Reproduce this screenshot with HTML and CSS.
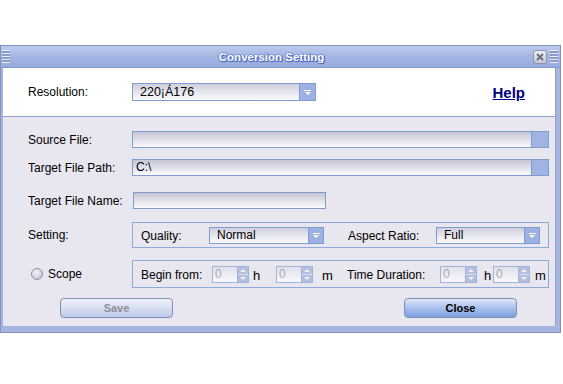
FILE: index.html
```html
<!DOCTYPE html>
<html lang="en">
<head>
    <meta charset="UTF-8">
    <title>Conversion Setting</title>
    <link rel="stylesheet" href="styles.css">
</head>
<body>
    <div class="window">
        <div class="titlebar">
            <span class="grip"></span>
            <span class="title">Conversion Setting</span>
            <span class="close-x">
                <svg width="8" height="8" viewBox="0 0 8 8"><path d="M1 1L7 7M7 1L1 7" stroke="#6a6e7c" stroke-width="1.8" fill="none"/></svg>
            </span>
            <span class="grip"></span>
        </div>

        <div class="frame">
            <div class="top-panel">
                <label class="label">Resolution:</label>
                <div class="combo combo-res">
                    <span class="combo-text">220¡Á176</span>
                    <span class="drop"></span>
                </div>
                <a class="help" href="#">Help</a>
            </div>

            <div class="main-panel">
                <div class="row row-source">
                    <label class="label">Source File:</label>
                    <div class="field field-path">
                        <span class="field-text"></span>
                        <span class="browse"></span>
                    </div>
                </div>

                <div class="row row-target">
                    <label class="label">Target File Path:</label>
                    <div class="field field-path">
                        <span class="field-text">C:\</span>
                        <span class="browse"></span>
                    </div>
                </div>

                <div class="row row-name">
                    <label class="label">Target File Name:</label>
                    <div class="field field-name"><span class="field-text"></span></div>
                </div>

                <div class="row row-setting">
                    <label class="label">Setting:</label>
                    <div class="group">
                        <span class="glabel quality-label">Quality:</span>
                        <div class="combo combo-quality">
                            <span class="combo-text">Normal</span>
                            <span class="drop"></span>
                        </div>
                        <span class="glabel aspect-label">Aspect Ratio:</span>
                        <div class="combo combo-aspect">
                            <span class="combo-text">Full</span>
                            <span class="drop"></span>
                        </div>
                    </div>
                </div>

                <div class="row row-scope">
                    <label class="label scope">
                        <span class="radio"></span>Scope
                    </label>
                    <div class="group group-time">
                        <span class="glabel begin-label">Begin from:</span>
                        <div class="spin"><span class="spin-text">0</span><span class="spin-arrows"><i class="up"></i><i class="down"></i></span></div>
                        <span class="unit unit-h1">h</span>
                        <div class="spin"><span class="spin-text">0</span><span class="spin-arrows"><i class="up"></i><i class="down"></i></span></div>
                        <span class="unit unit-m1">m</span>
                        <span class="glabel duration-label">Time Duration:</span>
                        <div class="spin"><span class="spin-text">0</span><span class="spin-arrows"><i class="up"></i><i class="down"></i></span></div>
                        <span class="unit unit-h2">h</span>
                        <div class="spin"><span class="spin-text">0</span><span class="spin-arrows"><i class="up"></i><i class="down"></i></span></div>
                        <span class="unit unit-m2">m</span>
                    </div>
                </div>

                <div class="row row-buttons">
                    <button class="btn btn-save" disabled>Save</button>
                    <button class="btn btn-close">Close</button>
                </div>
            </div>
        </div>
    </div>
</body>
</html>
```

FILE: styles.css
```css
* {
    box-sizing: border-box;
}

body {
    margin: 0;
    background: #fff;
    font-family: 'Liberation Sans', Arial, sans-serif;
    font-size: 12px;
    color: #000;
}

.window {
    margin-top: 45px;
    width: 561px;
    height: 288px;
    border: 1px solid #8292c0;
    background: #a6b5e0;
}

/* title bar */
.titlebar {
    height: 22px;
    display: flex;
    align-items: center;
    padding: 0 2px 0 1px;
    background: linear-gradient(#bccaee, #a5b6e3 50%, #98abdf);
    border-bottom: 1px solid #8a9ac6;
}

.grip {
    width: 8px;
    height: 13px;
    background: repeating-linear-gradient(#e8eef8 0, #e8eef8 1px, #8a9ac6 1px, #8a9ac6 3px);
}

.title {
    flex: 1;
    text-align: center;
    color: #fff;
    font-weight: bold;
    font-size: 11.5px;
    text-shadow: 1px 0 0 #4a6cc4, -1px 0 0 #6a88d4, 0 1px 0 #4a6cc4, 0 -1px 0 #7a96dc, 1px 1px 1px #3a5cb4;
}

.close-x {
    width: 14px;
    height: 14px;
    margin-right: 3px;
    border: 1px solid #8c93aa;
    border-radius: 3px;
    background: linear-gradient(#eeeef4, #c2c6d6);
    display: flex;
    align-items: center;
    justify-content: center;
}

.frame {
    padding: 0 4px 6px 2px;
}

/* resolution panel */
.top-panel {
    height: 48px;
    background: #fff;
    border-right: 1px solid #9a9aa6;
    display: flex;
    align-items: center;
    padding-left: 25px;
}

.label {
    width: 104px;
    flex-shrink: 0;
}

.combo {
    display: flex;
    height: 18px;
    border: 1px solid #7e9ccf;
    background: linear-gradient(#cfd0dd, #eeeef4 70%, #fafafc);
}

.combo-text {
    flex: 1;
    padding-left: 7px;
    line-height: 16px;
    font-size: 12.5px;
}

.drop {
    width: 15px;
    border-left: 1px solid #7e9ccf;
    background: #9db1e2;
    display: flex;
    flex-direction: column;
    align-items: center;
    justify-content: center;
    gap: 1px;
}

.drop::before {
    content: '';
    width: 7px;
    height: 1px;
    background: #fff;
}

.drop::after {
    content: '';
    border-left: 3px solid transparent;
    border-right: 3px solid transparent;
    border-top: 3px solid #fff;
}

.combo-res {
    width: 184px;
}

.combo-res .drop {
    width: 16px;
}

.help {
    margin-left: auto;
    margin-right: 30px;
    font-size: 15px;
    font-weight: bold;
    color: #000080;
}

/* settings panel */
.main-panel {
    height: 210px;
    border-top: 1px solid #8ea2cc;
    border-right: 1px solid #9aa4c4;
    background: #e8e6ef;
    padding: 14px 0 7px 25px;
}

.row {
    display: flex;
    align-items: center;
}

.row-target {
    margin-top: 11px;
}

.row-name {
    margin-top: 16px;
}

.row-setting {
    margin-top: 13px;
}

.row-scope {
    margin-top: 12px;
}

.row-buttons {
    margin-top: 10px;
    padding-left: 32px;
}

.field {
    display: flex;
    height: 17px;
    border: 1px solid #7e9ccf;
    background: linear-gradient(#c6c6d6, #e8e8f0 65%, #fafafc);
}

.field-text {
    flex: 1;
    padding-left: 3px;
    line-height: 15px;
}

.field-path {
    width: 417px;
}

.browse {
    width: 17px;
    border-left: 1px solid #7e9ccf;
    background: #a0b3e2;
}

.field-name {
    width: 193px;
    margin-left: 1px;
}

.group {
    width: 417px;
    height: 26px;
    border: 1px solid #8eaad8;
    display: flex;
    align-items: center;
    padding-left: 8px;
}

.glabel {
    flex-shrink: 0;
    padding-top: 2px;
}

.quality-label {
    width: 68px;
}

.combo-quality {
    width: 115px;
    height: 17px;
}

.aspect-label {
    width: 88px;
    margin-left: 24px;
}

.combo-aspect {
    width: 104px;
    height: 17px;
}

.combo-quality .combo-text,
.combo-aspect .combo-text {
    line-height: 14px;
    font-size: 12px;
}

.scope {
    display: flex;
    align-items: center;
    padding-left: 3px;
}

.radio {
    width: 12px;
    height: 12px;
    border-radius: 50%;
    border: 1px solid #8a90a8;
    background: radial-gradient(circle at 40% 35%, #f4f4f8, #b8bccc);
    margin-right: 5px;
}

.group-time {
    height: 28px;
}

.begin-label {
    width: 71px;
}

.duration-label {
    width: 93px;
}

.spin {
    display: flex;
    width: 37px;
    height: 17px;
    border: 1px solid #9fb5dc;
    flex-shrink: 0;
}

.spin-text {
    flex: 1;
    padding-left: 2px;
    line-height: 15px;
    color: #a8a8b4;
    background: linear-gradient(#e0e0ea, #f8f8fb);
}

.spin-arrows {
    width: 11px;
    display: flex;
    flex-direction: column;
    background: #b3bfdc;
    border-left: 1px solid #9fb5dc;
}

.spin-arrows i {
    flex: 1;
    display: flex;
    align-items: center;
    justify-content: center;
}

.spin-arrows .up {
    border-bottom: 1px solid #d8dff0;
}

.spin-arrows .up::after {
    content: '';
    border-left: 3px solid transparent;
    border-right: 3px solid transparent;
    border-bottom: 3px solid #eef2fa;
}

.spin-arrows .down::after {
    content: '';
    border-left: 3px solid transparent;
    border-right: 3px solid transparent;
    border-top: 3px solid #eef2fa;
}

.unit {
    flex-shrink: 0;
    font-size: 13px;
    padding-top: 2px;
}

.unit-h1 {
    width: 27px;
    padding-left: 4px;
}

.unit-m1 {
    width: 34px;
    padding-left: 9px;
}

.unit-h2 {
    width: 16px;
    padding-left: 7px;
}

.unit-m2 {
    padding-left: 5px;
}

/* buttons */
.btn {
    width: 113px;
    height: 20px;
    padding: 0;
    border: 1px solid #7f8fb3;
    border-radius: 4px;
    font-family: 'Liberation Sans', Arial, sans-serif;
    font-size: 11px;
    font-weight: bold;
}

.btn-save {
    color: #8e8e98;
    background: linear-gradient(#f0f2fa, #d4dcf0 55%, #bccbea);
}

.btn-close {
    margin-left: 231px;
    color: #000;
    background: linear-gradient(#dfe8fa, #a9c0ec 50%, #7d9fe0);
}
```
